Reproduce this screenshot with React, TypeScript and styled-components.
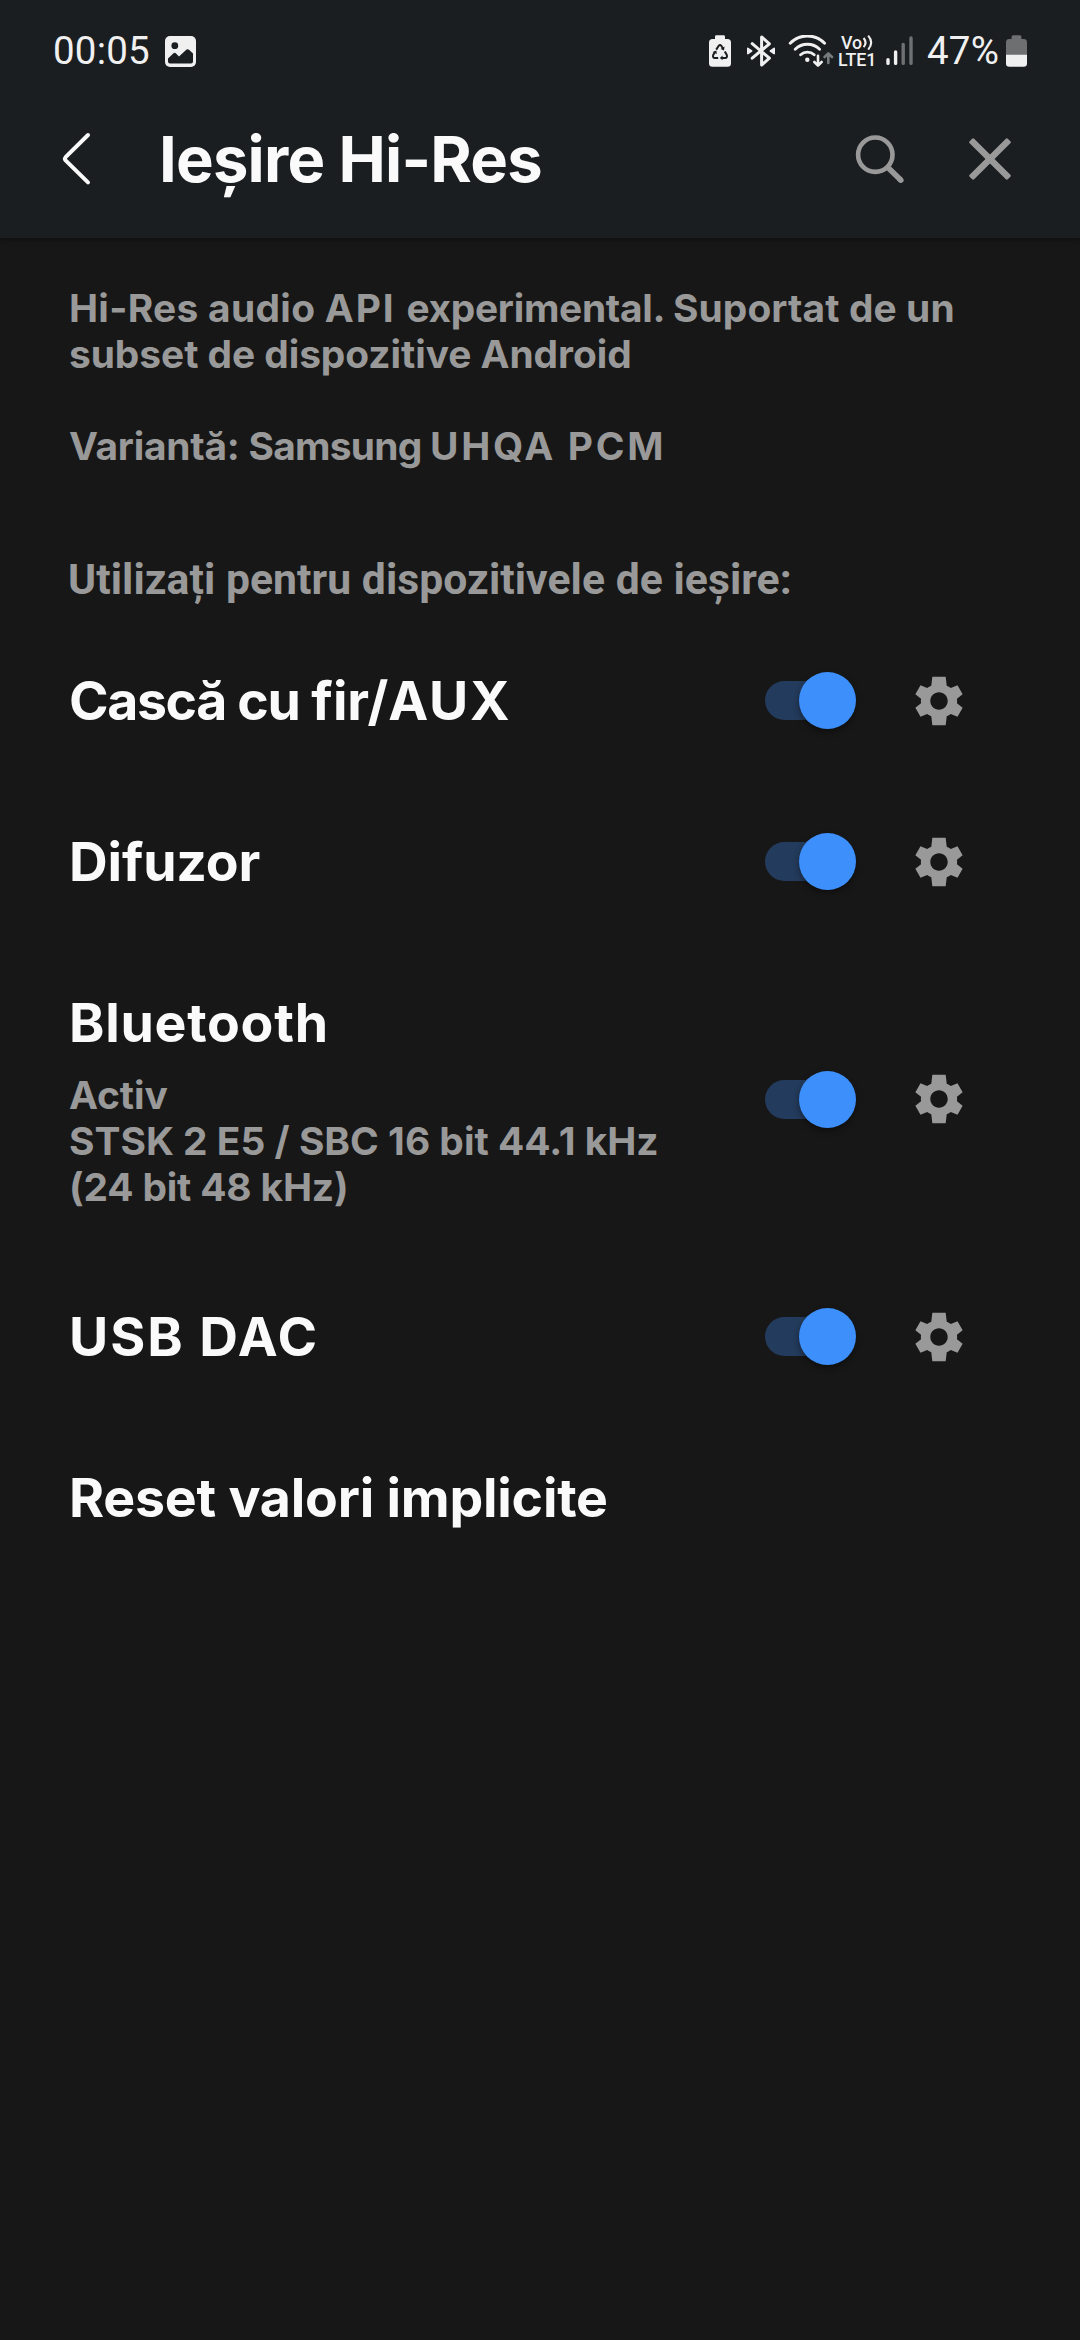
import React, { useState } from 'react';
import styled, { createGlobalStyle } from 'styled-components';

const GlobalStyle = createGlobalStyle`
  *, *::before, *::after { box-sizing: border-box; }
  body { margin: 0; background: #171717; }
`;

const Screen = styled.div`
  width: 1080px;
  min-height: 2340px;
  display: flex;
  flex-direction: column;
  background: #171717;
  color: #fafafa;
  font-family: Inter, Roboto, sans-serif;
  font-weight: 700;
`;

const Header = styled.header`
  height: 238px;
  background: #1a1e20;
  box-shadow: 0 2px 5px rgba(0, 0, 0, 0.35);
`;

const StatusBar = styled.div`
  height: 102px;
  padding: 0 53px;
  display: flex;
  align-items: center;
  color: #f0f0f0;
  font-family: Roboto, sans-serif;
  font-weight: 400;
`;

const StatusText = styled.span<{ $width: number }>`
  width: ${p => p.$width}px;
  font-size: 38.5px;
  line-height: 50px;
  letter-spacing: 0.2px;
  white-space: nowrap;
`;

const StatusIcons = styled.div`
  margin-left: auto;
  display: flex;
  align-items: center;
`;

const StatusItem = styled.div<{ $gap: number }>`
  display: flex;
  margin-left: ${p => p.$gap}px;
`;

const Volte = styled.div`
  width: 39px;
  display: flex;
  flex-direction: column;
  font-size: 17.8px;
  line-height: 17px;
  font-weight: 500;
  white-space: nowrap;
`;

const VolteTop = styled.div`
  display: flex;
  padding-left: 3px;
  height: 17px;
`;

const AppBar = styled.div`
  height: 114px;
  padding: 0 69px 0 58px;
  display: flex;
  align-items: center;
`;

const Title = styled.h1`
  margin: 0;
  flex: 1;
  padding-left: 64px;
  font-size: 63.3px;
  line-height: 80px;
  letter-spacing: -0.78px;
`;

const IconButton = styled.button<{ $gap?: number }>`
  display: flex;
  padding: 0;
  border: 0;
  background: none;
  color: #999;
  cursor: pointer;
  margin-left: ${p => p.$gap ?? 0}px;
`;

const Intro = styled.section`
  padding: 47px 69px 0;
  height: 316px;
`;

const Note = styled.p`
  margin: 0;
  color: #999;
  font-size: 38.9px;
  line-height: 46px;
  white-space: pre;
`;

const Blank = styled.div`
  height: 46px;
`;

const SectionLabel = styled.h2`
  margin: 0;
  height: 66px;
  padding-left: 68px;
  color: #999;
  font-family: Roboto, sans-serif;
  font-size: 42.7px;
  font-weight: 700;
  line-height: 50px;
  letter-spacing: 0.05px;
`;

const Row = styled.div`
  display: flex;
  align-items: center;
  padding: 0 112px 0 69px;
`;

const RowText = styled.div`
  flex: 1;
  padding: 49px 0 48px;
`;

const RowTitle = styled.div`
  font-size: 53.6px;
  line-height: 64px;
  white-space: pre;
`;

const RowDetails = styled.div`
  padding-top: 17px;
  margin-bottom: -2px;
`;

const Tracked = styled.span<{ $spacing: number }>`
  letter-spacing: ${p => p.$spacing}px;
`;

const Toggle = styled.button`
  width: 91px;
  height: 57px;
  padding: 0;
  border: 0;
  background: none;
  display: grid;
  align-items: center;
  cursor: pointer;
`;

const Track = styled.span<{ $on: boolean }>`
  grid-area: 1 / 1;
  width: 84px;
  height: 39px;
  border-radius: 20px;
  background: ${p => (p.$on ? '#233b5c' : '#3a3a3a')};
`;

const Thumb = styled.span<{ $on: boolean }>`
  grid-area: 1 / 1;
  justify-self: ${p => (p.$on ? 'end' : 'start')};
  width: 57px;
  height: 57px;
  border-radius: 50%;
  background: ${p => (p.$on ? '#3d8ffc' : '#999')};
  box-shadow: 0 3px 6px rgba(0, 0, 0, 0.4);
`;

const PictureIcon = () => (
  <svg width="31" height="31" viewBox="0 0 31 31">
    <rect width="31" height="31" rx="5" fill="#f0f0f0" />
    <circle cx="9.8" cy="9.7" r="3.4" fill="#1a1e20" />
    <path
      d="M3 22.4 L8.8 17 Q9.8 16.2 10.8 17.2 L14 20.6 L21.6 13.6 Q22.8 12.6 24 13.8 L28 17.6 V25.6 Q28 27.6 26 27.6 H5 Q3 27.6 3 25.6 Z"
      fill="#1a1e20"
    />
  </svg>
);

const EcoBatteryIcon = () => (
  <svg width="22" height="32" viewBox="0 0 22 32">
    <path d="M6 4 V1.6 Q6 0.2 7.4 0.2 H14.6 Q16 0.2 16 1.6 V4 H18.5 Q22 4 22 7.5 V28.2 Q22 31.7 18.5 31.7 H3.5 Q0 31.7 0 28.2 V7.5 Q0 4 3.5 4 Z" fill="#f0f0f0" />
    <g fill="none" stroke="#1a1e20" strokeWidth="2">
      <path d="M7.2 14.6 L9.7 10.8 Q11 9.2 12.3 10.8 L14 13.6" />
      <path d="M15.8 16.4 L17.8 20 Q18.6 22.8 16 23 H13" />
      <path d="M9.2 23 H6 Q3.4 22.8 4.2 20 L6 16.9" />
    </g>
    <path d="M15.6 11.6 L15 15.6 L11.6 14 Z M13.6 20.6 V25.2 L10.8 23 Z M3.6 17 L7.4 15.4 L7.8 19 Z" fill="#1a1e20" />
  </svg>
);

const BluetoothIcon = () => (
  <svg width="28" height="32" viewBox="0 0 28 32">
    <path
      d="M5.2 8.6 L22.4 23.2 L14.6 30 V2 L22.4 8.8 L5.2 23.2"
      fill="none"
      stroke="#f0f0f0"
      strokeWidth="3"
      strokeLinejoin="round"
      strokeLinecap="round"
    />
    <path d="M0.8 13.4 L4.6 16 L0.8 18.6 Z M27.2 13.4 L23.4 16 L27.2 18.6 Z" fill="#f0f0f0" stroke="#f0f0f0" strokeWidth="1.6" strokeLinejoin="round" />
  </svg>
);

const WifiIcon = () => (
  <svg width="46" height="32" viewBox="0 0 46 32" fill="none" strokeLinecap="round" strokeLinejoin="round">
    <g stroke="#f0f0f0" strokeWidth="2.9">
      <path d="M2.2 8.2 A24 24 0 0 1 36.6 8.2" />
      <path d="M7.2 14.2 A17.5 17.5 0 0 1 31.6 14.2" />
      <path d="M12.6 19.8 A10 10 0 0 1 26.2 19.8" />
    </g>
    <circle cx="19.3" cy="24.8" r="2.2" fill="#f0f0f0" />
    <path d="M30 20.8 V30.4 M26.4 27 L30 30.6 L33.6 27" stroke="#f0f0f0" strokeWidth="2.6" />
    <path d="M40.3 28 V18.6 M36.6 22 L40.3 18.4 L44 22" stroke="#777a7b" strokeWidth="2.6" />
  </svg>
);

const VoiceWaves = () => (
  <svg width="12" height="17" viewBox="0 0 12 17" fill="none" stroke="#f0f0f0" strokeWidth="2.1">
    <path d="M1.6 4 Q5.4 8.6 1.6 13.2" />
    <path d="M6.2 1.6 Q12.2 8.6 6.2 15.6" />
  </svg>
);

const SignalIcon = () => (
  <svg width="27" height="32" viewBox="0 0 27 32" strokeWidth="3.4" strokeLinecap="round">
    <path d="M2 24.6 V28.4 M9.6 17 V28.4" stroke="#f0f0f0" />
    <path d="M17.2 9.4 V28.4 M25 3 V28.4" stroke="#6e7172" />
  </svg>
);

const BatteryIcon = () => (
  <svg width="21" height="32" viewBox="0 0 21 32">
    <path d="M5.6 4 V1.8 Q5.6 0.3 7.1 0.3 H13.9 Q15.4 0.3 15.4 1.8 V4 H17.6 Q21 4 21 7.4 V20 H0 V7.4 Q0 4 3.4 4 Z" fill="#6e6f70" />
    <path d="M0 19.7 H21 V28.4 Q21 31.7 17.6 31.7 H3.4 Q0 31.7 0 28.4 Z" fill="#f0f0f0" />
  </svg>
);

const BackIcon = () => (
  <svg width="37" height="60" viewBox="0 0 37 60" fill="none" stroke="#fafafa" strokeWidth="4" strokeLinecap="round" strokeLinejoin="round">
    <path d="M30 6 L7.6 28.2 Q6.2 29.8 7.6 31.4 L30 53.4" />
  </svg>
);

const SearchIcon = () => (
  <svg width="50" height="50" viewBox="0 0 50 50" fill="none" stroke="#999">
    <circle cx="20.3" cy="20.7" r="17.2" strokeWidth="4.6" />
    <path d="M33.4 34 L46 46.3" strokeWidth="5.6" strokeLinecap="butt" />
    <path d="M44.8 45.2 L45.9 46.2" strokeWidth="5.4" strokeLinecap="round" />
  </svg>
);

const CloseIcon = () => (
  <svg width="42" height="42" viewBox="0 0 42 42" fill="#999">
    <rect x="-6" y="17.8" width="54" height="6.4" rx="1.4" transform="rotate(45 21 21)" />
    <rect x="-6" y="17.8" width="54" height="6.4" rx="1.4" transform="rotate(-45 21 21)" />
  </svg>
);

const GearIcon = () => (
  <svg width="58" height="58" viewBox="0 0 24 24" fill="#999">
    <path d="M19.43 12.98c.04-.32.07-.64.07-.98s-.03-.66-.07-.98l2.35-1.84-2.12-3.68-2.77 1.12c-.52-.4-1.08-.73-1.69-.98L14.76 2H9.24L8.8 5.64c-.61.25-1.17.59-1.69.98L4.34 5.5 2.22 9.18l2.35 1.84c-.04.32-.07.65-.07.98s.03.66.07.98l-2.35 1.84 2.12 3.68 2.77-1.12c.52.4 1.08.73 1.69.98L9.24 22h5.52l.44-3.64c.61-.25 1.17-.59 1.69-.98l2.77 1.12 2.12-3.68-2.35-1.84zM12 15.6c-1.99 0-3.6-1.61-3.6-3.6s1.61-3.6 3.6-3.6 3.6 1.61 3.6 3.6-1.61 3.6-3.6 3.6z" />
  </svg>
);

/* A line of text as runs, each with its own tracking in px. */
type Run = [text: string, spacing: number];

interface Output {
  title: Run[];
  details?: Run[][];
}

const intro: Run[][] = [
  [['Hi-Res audio ', 0.3], ['API ', 1.8], ['experimental. ', -0.3], ['Suportat de un', 0.1]],
  [['subset de dispozitive Android', -0.06]],
];

const variant: Run[] = [['Variantă: ', -0.25], ['Samsung ', -0.75], ['UHQA PCM', 2.7]];

const outputs: Output[] = [
  { title: [['Cască ', -1.4], ['cu ', -1.2], ['fir/', -0.1], ['AUX', 1.8]] },
  { title: [['Difuzor', -0.14]] },
  {
    title: [['Bluetooth', 0.73]],
    details: [
      [['Activ', -0.08]],
      [['STSK 2 E5 / SBC 16 bit 44.1 kHz', 0.01]],
      [['(24 bit 48 kHz)', -0.17]],
    ],
  },
  { title: [['USB DAC', 1.95]] },
];

const Runs = ({ runs }: { runs: Run[] }) => (
  <>
    {runs.map(([text, spacing]) => (
      <Tracked key={text} $spacing={spacing}>{text}</Tracked>
    ))}
  </>
);

function OutputRow({ output }: { output: Output }) {
  const [on, setOn] = useState(true);
  return (
    <Row>
      <RowText>
        <RowTitle><Runs runs={output.title} /></RowTitle>
        {output.details && (
          <RowDetails>
            {output.details.map(line => (
              <Note key={line[0][0]}><Runs runs={line} /></Note>
            ))}
          </RowDetails>
        )}
      </RowText>
      <Toggle role="switch" aria-checked={on} onClick={() => setOn(!on)}>
        <Track $on={on} />
        <Thumb $on={on} />
      </Toggle>
      <IconButton $gap={54}>
        <GearIcon />
      </IconButton>
    </Row>
  );
}

export default function App() {
  return (
    <Screen>
      <GlobalStyle />
      <Header>
        <StatusBar>
          <StatusText $width={112}>00:05</StatusText>
          <PictureIcon />
          <StatusIcons>
            <StatusItem $gap={0}><EcoBatteryIcon /></StatusItem>
            <StatusItem $gap={16}><BluetoothIcon /></StatusItem>
            <StatusItem $gap={13}><WifiIcon /></StatusItem>
            <StatusItem $gap={4}>
              <Volte>
                <VolteTop>Vo<VoiceWaves /></VolteTop>
                <span>LTE1</span>
              </Volte>
            </StatusItem>
            <StatusItem $gap={9}><SignalIcon /></StatusItem>
            <StatusItem $gap={14}><StatusText $width={71}>47%</StatusText></StatusItem>
            <StatusItem $gap={8}><BatteryIcon /></StatusItem>
          </StatusIcons>
        </StatusBar>
        <AppBar>
          <IconButton><BackIcon /></IconButton>
          <Title>Ieșire Hi-Res</Title>
          <IconButton><SearchIcon /></IconButton>
          <IconButton $gap={64}><CloseIcon /></IconButton>
        </AppBar>
      </Header>
      <Intro>
        {intro.map(line => (
          <Note key={line[0][0]}><Runs runs={line} /></Note>
        ))}
        <Blank />
        <Note><Runs runs={variant} /></Note>
      </Intro>
      <SectionLabel>Utilizați pentru dispozitivele de ieșire:</SectionLabel>
      {outputs.map(output => (
        <OutputRow key={output.title[0][0]} output={output} />
      ))}
      <Row>
        <RowText>
          <RowTitle><Runs runs={[['Reset valori implicite', -0.22]]} /></RowTitle>
        </RowText>
      </Row>
    </Screen>
  );
}
